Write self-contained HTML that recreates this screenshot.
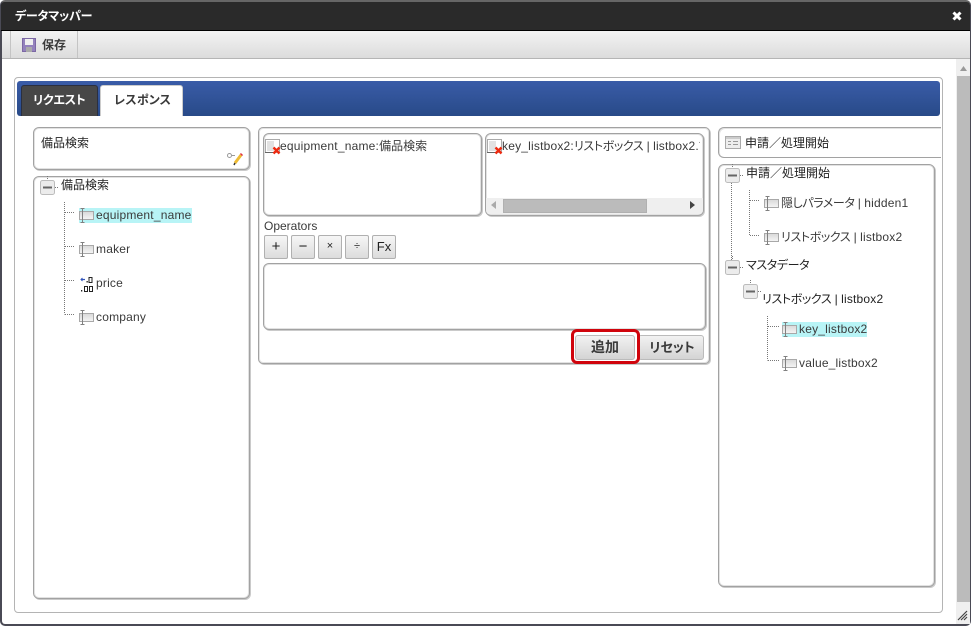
<!DOCTYPE html>
<html lang="ja">
<head>
<meta charset="utf-8">
<title>データマッパー</title>
<style>
html,body{margin:0;padding:0;width:971px;height:626px;overflow:hidden;background:#fff}
body{position:relative;font-family:"Liberation Sans","Noto Sans CJK JP",sans-serif;font-size:12px;color:#3a3a3a;font-feature-settings:"palt" 1}
.a{position:absolute;box-sizing:border-box}
.t{position:absolute;white-space:nowrap;line-height:16px;height:16px}
.l{letter-spacing:.2px}
.k{letter-spacing:-.4px}
.box{position:absolute;box-sizing:border-box;border:1px solid #a2a2a2;border-radius:6px;background:#fff;box-shadow:inset 0 0 0 1px #e2e2e2,1px 1px 0 #cacaca}
.op{position:absolute;box-sizing:border-box;top:235px;width:24px;height:24px;border:1px solid #b0b0b0;border-radius:2px;background:linear-gradient(#f6f6f6,#dcdcdc);text-align:center;line-height:21px;color:#222}
.btn{position:absolute;box-sizing:border-box;border:1px solid #bbb;border-radius:3px;background:linear-gradient(#f2f2f2,#d4d4d4);text-align:center;font-weight:bold;font-size:14px;color:#3a3a3a;line-height:23px;top:335px;height:25px}
svg{position:absolute;display:block;overflow:visible}
.hl{position:absolute;background:#b8f4f6}
</style>
</head>
<body>
<svg width="0" height="0" style="position:absolute">
<defs>
<linearGradient id="g1" x1="0" y1="0" x2="0" y2="1"><stop offset="0" stop-color="#d8d8d8"/><stop offset="1" stop-color="#f6f6f6"/></linearGradient>
<g id="fld">
<rect x="0.500" y="2.500" width="14" height="8" fill="url(#g1)" stroke="#a8a8a8"/>
<path d="M1.500 -0.500h4M1.500 13.500h4M3.500 -0.500v14" stroke="#808080" fill="none"/>
</g>
<g id="tog">
<path d="M7.500 -4v4M15 7.500h3" stroke="#777" stroke-dasharray="1 1" fill="none"/>
<rect x="0.500" y="0.500" width="14" height="14" rx="2" fill="#ececec" stroke="#bcbcbc"/>
<rect x="3" y="6.500" width="9" height="2" fill="#666"/>
</g>
<g id="err">
<rect x="1.500" y="1.500" width="14" height="13" fill="#fff" stroke="#aaa"/>
<rect x="3" y="3" width="7" height="10" fill="#e2e2e2"/>
<path d="M1 14.500h9" stroke="#666"/>
<path d="M9.500 9.500l6 6M15.500 9.500l-6 6" stroke="#ee2a10" stroke-width="2.400" fill="none"/>
</g>
</defs>
</svg>

<!-- frame -->
<div class="a" style="left:0;top:0;width:971px;height:626px;border:2px solid #4a4a55;border-top-color:#666;border-right-width:1px;border-radius:5px"></div>
<!-- title bar -->
<div class="a" style="left:1px;top:2px;width:969px;height:29px;background:#2a2a2a;border-bottom:1px solid #000;border-radius:3px 3px 0 0"></div>
<div class="t" style="left:15px;top:8px;color:#fff;font-weight:bold;letter-spacing:-.2px">データマッパー</div>
<svg style="left:952px;top:11px" width="10" height="10"><path d="M1.500 1.500l7 7M8.500 1.500l-7 7" stroke="#fff" stroke-width="3"/></svg>

<!-- toolbar -->
<div class="a" style="left:2px;top:31px;width:968px;height:28px;background:linear-gradient(#f3f3f3,#dcdcdc);border-bottom:1px solid #b5b5b5"></div>
<div class="a" style="left:10px;top:31px;width:68px;height:27px;border-left:1px solid #c4c4c4;border-right:1px solid #c4c4c4"></div>
<svg style="left:22px;top:38px" width="14" height="14">
<rect x="0.500" y="0.500" width="13" height="13" fill="#9482bd" stroke="#7c68a4"/>
<rect x="3" y="1" width="8" height="6" fill="#f0f0f0"/>
<rect x="4" y="9" width="6" height="5" fill="#aaa"/>
</svg>
<div class="t" style="left:42px;top:37px;font-weight:bold">保存</div>

<!-- scrollbar -->
<div class="a" style="left:956px;top:59px;width:14px;height:565px;background:#efefef"></div>
<div class="a" style="left:957px;top:76px;width:13px;height:526px;background:#bbb"></div>
<svg style="left:960px;top:66px" width="8" height="5"><path d="M0 5L3.500 0 7 5z" fill="#999"/></svg>
<svg style="left:957px;top:610px" width="12" height="12"><path d="M1 10L10 1M4 10L10 4M7 10l3-3" stroke="#444" stroke-width="1.200"/></svg>

<!-- outer panel -->
<div class="a" style="left:14px;top:77px;width:929px;height:536px;border:1px solid #b4b4b4;border-radius:4px;background:#fff"></div>
<div class="a" style="left:17px;top:81px;width:923px;height:35px;background:linear-gradient(#3a5ca8,#284a88);border-radius:3px"></div>
<div class="a" style="left:21px;top:85px;width:77px;height:31px;background:#474747;border:1px solid #2a2f40;border-bottom:0;border-radius:3px 3px 0 0"></div>
<div class="t" style="left:33px;top:92px;color:#fff;font-weight:bold;letter-spacing:-.3px">リクエスト</div>
<div class="a" style="left:100px;top:85px;width:83px;height:31px;background:#fff;border:1px solid #ccc;border-bottom:0;border-radius:3px 3px 0 0"></div>
<div class="t" style="left:114px;top:92px;font-weight:bold;letter-spacing:.2px">レスポンス</div>

<!-- left column -->
<div class="box" style="left:33px;top:127px;width:217px;height:43px"></div>
<div class="t" style="left:41px;top:135px;color:#222">備品検索</div>
<svg style="left:226px;top:152px" width="18" height="16">
<circle cx="3.500" cy="3.500" r="2" fill="#fff" stroke="#999"/>
<path d="M6 3.500h3" stroke="#999"/>
<path d="M9 11l6-8" stroke="#eebb33" stroke-width="3"/>
<path d="M15 3l1-1" stroke="#e03040" stroke-width="3"/>
<path d="M8 13l1-2" stroke="#333" stroke-width="1.500"/>
</svg>

<div class="box" style="left:33px;top:176px;width:217px;height:423px"></div>
<svg style="left:40px;top:180px" width="15" height="15"><use href="#tog"/></svg>
<div class="t" style="left:61px;top:177px;color:#222">備品検索</div>
<svg style="left:60px;top:198px" width="20" height="120"><path d="M4.500 4V116.500M5 14.500h10M5 48.500h10M5 82.500h10M5 116.500h10" stroke="#777" stroke-dasharray="1 1" fill="none"/></svg>
<div class="hl" style="left:79px;top:208px;width:113px;height:15px"></div>
<svg style="left:79px;top:209px" width="17" height="14"><use href="#fld"/></svg>
<div class="t l" style="left:96px;top:207px">equipment_name</div>
<svg style="left:79px;top:243px" width="17" height="14"><use href="#fld"/></svg>
<div class="t l" style="left:96px;top:241px">maker</div>
<svg style="left:80px;top:277px" width="15" height="15" fill="none">
<path d="M1 2.500h4" stroke="#3355bb" stroke-width="1.200"/>
<path d="M2.500 1L1 2.500 2.500 4" stroke="#3355bb"/>
<rect x="6.500" y="4" width="1.300" height="1.500" fill="#222"/>
<rect x="9" y="0.500" width="3" height="5" stroke="#222"/>
<rect x="1" y="13" width="1.300" height="1.500" fill="#222"/>
<rect x="4.500" y="9.500" width="3" height="5" stroke="#222"/>
<rect x="9.500" y="9.500" width="3" height="5" stroke="#222"/>
</svg>
<div class="t l" style="left:96px;top:275px">price</div>
<svg style="left:79px;top:311px" width="17" height="14"><use href="#fld"/></svg>
<div class="t l" style="left:96px;top:309px">company</div>

<!-- middle column -->
<div class="box" style="left:258px;top:127px;width:452px;height:237px;border-radius:5px"></div>
<div class="box" style="left:263px;top:133px;width:219px;height:83px"></div>
<svg style="left:264px;top:138px" width="16" height="16"><use href="#err"/></svg>
<div class="t" style="left:280px;top:138px"><span class="l">equipment_name:</span>備品検索</div>

<div class="box" style="left:485px;top:133px;width:219px;height:83px;overflow:hidden">
  <div class="a" style="left:0;top:64px;width:217px;height:16px;background:#efefef"></div>
  <div class="a" style="left:17px;top:65px;width:144px;height:14px;background:#bbb;border:1px solid #b0b0b0"></div>
  <div class="t" style="left:16px;top:4px;width:198px;overflow:hidden"><span class="l">key_listbox2:</span><span class="k">リストボックス</span> | <span class="l">listbox2.</span>マスタ</div>
</div>
<svg style="left:486px;top:138px" width="16" height="16"><use href="#err"/></svg>
<svg style="left:491px;top:201px" width="5" height="8"><path d="M5 0v8L0 4z" fill="#aaa"/></svg>
<svg style="left:690px;top:201px" width="5" height="8"><path d="M0 0v8l5-4z" fill="#444"/></svg>

<div class="t" style="left:264px;top:218px">Operators</div>
<div class="op" style="left:264px;font-size:15px">+</div>
<div class="op" style="left:291px;font-size:15px">−</div>
<div class="op" style="left:318px;font-size:11px">×</div>
<div class="op" style="left:345px;font-size:11px">÷</div>
<div class="op" style="left:372px;font-size:13px">Fx</div>

<div class="box" style="left:263px;top:263px;width:443px;height:67px"></div>

<div class="btn" style="left:638px;width:66px;font-size:13px;padding-left:2px">リセット</div>
<div class="a" style="left:571px;top:329px;width:69px;height:35px;border:3px solid #d0040c;border-radius:6px;background:#fff"></div>
<div class="btn" style="left:575px;width:60px">追加</div>

<!-- right column -->
<div class="a" style="left:718px;top:127px;width:223px;height:31px;border:1px solid #a2a2a2;border-right:0;border-radius:6px 0 0 6px;background:#fff;box-shadow:inset 1px 1px 0 #e2e2e2"></div>
<svg style="left:725px;top:136px" width="16" height="13">
<rect x="0.500" y="0.500" width="15" height="12" fill="#eee" stroke="#aaa"/>
<rect x="1" y="1" width="14" height="2" fill="#ccc"/>
<path d="M3 5.500h3M8 5.500h5M3 8.500h3M8 8.500h5" stroke="#999"/>
</svg>
<div class="t" style="left:745px;top:135px;color:#222">申請／処理開始</div>

<div class="box" style="left:718px;top:164px;width:217px;height:423px"></div>
<svg style="left:731px;top:183px" width="2" height="78"><path d="M0.500 0v78" stroke="#777" stroke-dasharray="1 1"/></svg>
<svg style="left:725px;top:168px" width="15" height="15"><use href="#tog"/></svg>
<div class="t" style="left:746px;top:165px;color:#222">申請／処理開始</div>
<svg style="left:748px;top:190px" width="18" height="50"><path d="M1.500 0V45.500M2 10.500h10M2 45.500h10" stroke="#777" stroke-dasharray="1 1" fill="none"/></svg>
<svg style="left:764px;top:197px" width="17" height="14"><use href="#fld"/></svg>
<div class="t" style="left:781px;top:195px"><span class="k">隠しパラメータ</span> | <span class="l">hidden1</span></div>
<svg style="left:764px;top:231px" width="17" height="14"><use href="#fld"/></svg>
<div class="t" style="left:781px;top:229px"><span class="k">リストボックス</span> | <span class="l">listbox2</span></div>

<svg style="left:725px;top:260px" width="15" height="15"><use href="#tog"/></svg>
<div class="t k" style="left:746px;top:257px;color:#222">マスタデータ</div>
<svg style="left:743px;top:284px" width="15" height="15"><use href="#tog"/></svg>
<div class="t" style="left:762px;top:291px;color:#222"><span class="k">リストボックス</span> | <span class="l">listbox2</span></div>
<svg style="left:766px;top:316px" width="16" height="50"><path d="M1.500 0V44.500M2 10.500h12M2 44.500h12" stroke="#777" stroke-dasharray="1 1" fill="none"/></svg>
<div class="hl" style="left:782px;top:322px;width:85px;height:15px"></div>
<svg style="left:782px;top:323px" width="17" height="14"><use href="#fld"/></svg>
<div class="t l" style="left:799px;top:321px">key_listbox2</div>
<svg style="left:782px;top:357px" width="17" height="14"><use href="#fld"/></svg>
<div class="t l" style="left:799px;top:355px">value_listbox2</div>
</body>
</html>
